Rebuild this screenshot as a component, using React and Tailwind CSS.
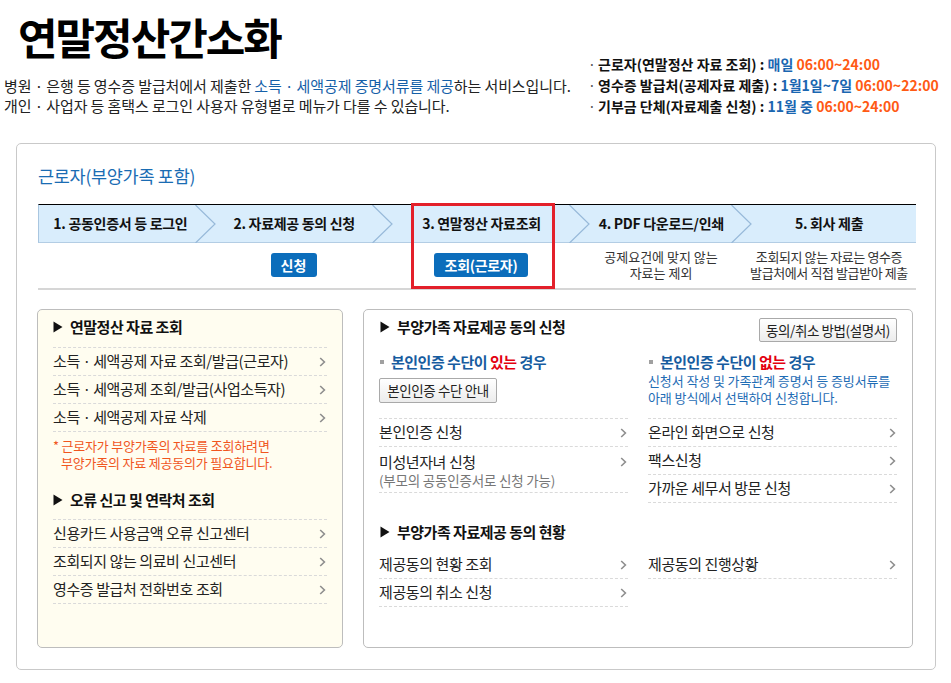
import React from "react";

const FONT = { fontFamily: '"Noto Sans CJK KR", "Noto Sans", sans-serif' };

function Chev() {
  return (
    <svg width="7" height="10" viewBox="0 0 7 10" className="shrink-0">
      <path d="M1.2 1 L5.4 5 L1.2 9" fill="none" stroke="#8e8e8e" strokeWidth="1.6" />
    </svg>
  );
}

function Tri() {
  return (
    <svg width="10" height="12" viewBox="0 0 10 12" className="shrink-0">
      <polygon points="0.5,0.5 9.5,6 0.5,11.5" fill="#111" />
    </svg>
  );
}

function Heading({ children }) {
  return (
    <div className="flex items-center gap-[7px] h-[20px] text-[15px] font-bold text-[#111] tracking-[-0.5px]">
      <Tri />
      <span>{children}</span>
    </div>
  );
}

function Item({ children }) {
  return (
    <li className="flex items-center justify-between h-[28px] border-b border-dashed border-[#dadada] text-[15px] text-[#222] tracking-[-0.4px] pr-[1px]">
      <span>{children}</span>
      <Chev />
    </li>
  );
}

function StepChevron() {
  return (
    <svg
      width="21"
      height="38"
      viewBox="0 0 21 38"
      className="absolute right-[-10px] top-0 z-10"
    >
      <polyline points="0.5,0 20,19 0.5,38" fill="none" stroke="#97b9d9" strokeWidth="1.2" />
    </svg>
  );
}

const steps = [
  { w: "w-[167px]", label: "1. 공동인증서 등 로그인" },
  { w: "w-[177px]", label: "2. 자료제공 동의 신청" },
  { w: "w-[198px]", label: "3. 연말정산 자료조회" },
  { w: "w-[162px]", label: "4. PDF 다운로드/인쇄" },
  { w: "w-[174px]", label: "5. 회사 제출" },
];

export default function App() {
  return (
    <div className="w-[951px] h-[683px] bg-white overflow-hidden text-[#222]" style={FONT}>
      {/* header */}
      <div className="flex h-[143px]">
        <div className="w-[584px] pl-[4px]">
          <div className="pl-[14px] pt-[15px] h-[61px] text-[43px] leading-[43px] font-bold tracking-[-2px] text-black">
            연말정산간소화
          </div>
          <div className="mt-[15px] text-[15px] leading-[20px] text-[#222] tracking-[-0.1px]">
            <div>
              병원 · 은행 등 영수증 발급처에서 제출한{" "}
              <span className="text-[#1560a8]">소득 · 세액공제 증명서류를 제공</span>하는 서비스입니다.
            </div>
            <div>개인 · 사업자 등 홈택스 로그인 사용자 유형별로 메뉴가 다를 수 있습니다.</div>
          </div>
        </div>
        <div className="pt-[54px] pl-[4px] text-[14px] leading-[21px] font-bold text-[#111]">
          <div className="flex">
            <span className="w-[10px] font-normal text-[#555]">·</span>
            <span>
              근로자(연말정산 자료 조회) : <span className="text-[#1a66b1]">매일</span>{" "}
              <span className="text-[#ff5a14]">06:00~24:00</span>
            </span>
          </div>
          <div className="flex">
            <span className="w-[10px] font-normal text-[#555]">·</span>
            <span>
              영수증 발급처(공제자료 제출) : <span className="text-[#1a66b1]">1월1일~7일</span>{" "}
              <span className="text-[#ff5a14]">06:00~22:00</span>
            </span>
          </div>
          <div className="flex">
            <span className="w-[10px] font-normal text-[#555]">·</span>
            <span>
              기부금 단체(자료제출 신청) : <span className="text-[#1a66b1]">11월 중</span>{" "}
              <span className="text-[#ff5a14]">06:00~24:00</span>
            </span>
          </div>
        </div>
      </div>

      {/* main box */}
      <div className="ml-[16px] w-[920px] h-[527px] border border-[#c9c9c9] rounded-[5px] pl-[21px] pt-[20px]">
        <div className="h-[24px] leading-[24px] text-[17.5px] text-[#1a6cb3] tracking-[-0.3px]">
          근로자(부양가족 포함)
        </div>

        <div className="relative mt-[16px] w-[878px]">
          {/* steps bar */}
          <div className="flex h-[39px] border-t border-t-black border-b border-b-[#b3cde4] border-l border-l-[#a9c6e0] bg-[#d9edfc]">
            {steps.map((s, i) => (
              <div
                key={i}
                className={`${s.w} relative flex items-center justify-center text-[14px] font-bold text-[#111] tracking-[-0.3px]`}
              >
                <span className={i === 0 ? "pr-[4px]" : ""}>{s.label}</span>
                {i < 4 && <StepChevron />}
              </div>
            ))}
          </div>

          {/* under row */}
          <div className="flex h-[47px] border-b-2 border-b-[#d6d6d6]">
            <div className="w-[167px]" />
            <div className="w-[177px] flex justify-center pt-[10px]">
              <div className="h-[24px] w-[46px] rounded-[3px] bg-[#0b6dbb] text-white text-[14px] font-bold leading-[24px] text-center">
                신청
              </div>
            </div>
            <div className="w-[198px] flex justify-center pt-[10px]">
              <div className="h-[24px] w-[94px] rounded-[3px] bg-[#0b6dbb] text-white text-[14px] font-bold leading-[24px] text-center tracking-[-0.3px]">
                조회(근로자)
              </div>
            </div>
            <div className="w-[162px] pt-[6px] text-center text-[13px] leading-[16px] text-[#333]">
              <div>공제요건에 맞지 않는</div>
              <div>자료는 제외</div>
            </div>
            <div className="w-[174px] pt-[6px] text-center text-[13px] leading-[16px] text-[#333] tracking-[-0.4px]">
              <div>조회되지 않는 자료는 영수증</div>
              <div>발급처에서 직접 발급받아 제출</div>
            </div>
          </div>

          {/* highlight */}
          <div className="absolute left-[373px] top-[-1px] w-[144px] h-[86px] border-[3px] border-[#e3202a] pointer-events-none" />
        </div>

        {/* panels */}
        <div className="flex gap-[20px] mt-[19px] ml-[-1px]">
          {/* left panel */}
          <div className="w-[306px] h-[339px] border border-[#bdbdbd] rounded-[5px] bg-[#fffdf0] px-[15px] pt-[7px]">
            <Heading>연말정산 자료 조회</Heading>
            <ul className="mt-[10px] border-t border-dashed border-[#dadada]">
              <Item>소득ㆍ세액공제 자료 조회/발급(근로자)</Item>
              <Item>소득ㆍ세액공제 조회/발급(사업소득자)</Item>
              <Item>소득ㆍ세액공제 자료 삭제</Item>
            </ul>
            <div className="mt-[5px] text-[13px] leading-[17px] text-[#f0561e] tracking-[-0.2px]">
              <div>* 근로자가 부양가족의 자료를 조회하려면</div>
              <div className="pl-[8px]">부양가족의 자료 제공동의가 필요합니다.</div>
            </div>
            <div className="mt-[19px]">
              <Heading>오류 신고 및 연락처 조회</Heading>
            </div>
            <ul className="mt-[9px] border-t border-dashed border-[#dadada]">
              <Item>신용카드 사용금액 오류 신고센터</Item>
              <Item>조회되지 않는 의료비 신고센터</Item>
              <Item>영수증 발급처 전화번호 조회</Item>
            </ul>
          </div>

          {/* right panel */}
          <div className="w-[550px] h-[339px] border border-[#bdbdbd] rounded-[5px] bg-white pl-[16px] pr-[15px] pt-[7px]">
            <div className="flex justify-between">
              <Heading>부양가족 자료제공 동의 신청</Heading>
              <div className="mt-[1px] h-[24px] w-[138px] border border-[#a9a9a9] rounded-[2px] bg-gradient-to-b from-white to-[#ececec] text-[13.5px] leading-[22px] text-center text-[#222] tracking-[-0.4px]">
                동의/취소 방법(설명서)
              </div>
            </div>

            <div className="grid grid-cols-2 gap-x-[20px] mt-[10px] ml-[-1px]">
              {/* left col */}
              <div>
                <div className="h-[66px]">
                  <div className="flex items-center h-[20px] text-[15px] font-bold text-[#175c9f] tracking-[-0.5px]">
                    <span className="w-[4px] h-[4px] bg-[#a0a0a0] mr-[7px] ml-[1px]" />
                    본인인증 수단이&nbsp;<span className="text-[#e3000f]">있는</span>&nbsp;경우
                  </div>
                  <div className="mt-[6px] h-[25px] w-[118px] border border-[#a9a9a9] rounded-[2px] bg-gradient-to-b from-white to-[#ececec] text-[13.5px] leading-[23px] text-center text-[#222] tracking-[-0.4px]">
                    본인인증 수단 안내
                  </div>
                </div>
                <ul className="border-t border-dashed border-[#dadada]">
                  <Item>본인인증 신청</Item>
                  <li className="flex items-start justify-between h-[46px] pt-[5px] border-b border-dashed border-[#dadada] pr-[1px]">
                    <div>
                      <div className="text-[15px] leading-[20px] text-[#222] tracking-[-0.4px]">미성년자녀 신청</div>
                      <div className="text-[13.5px] leading-[16px] text-[#777] tracking-[-0.2px]">
                        (부모의 공동인증서로 신청 가능)
                      </div>
                    </div>
                    <div className="h-[20px] flex items-center">
                      <Chev />
                    </div>
                  </li>
                </ul>
              </div>

              {/* right col */}
              <div>
                <div className="h-[66px]">
                  <div className="flex items-center h-[20px] text-[15px] font-bold text-[#175c9f] tracking-[-0.5px]">
                    <span className="w-[4px] h-[4px] bg-[#a0a0a0] mr-[7px] ml-[1px]" />
                    본인인증 수단이&nbsp;<span className="text-[#e3000f]">없는</span>&nbsp;경우
                  </div>
                  <div className="text-[13px] leading-[17px] text-[#1f6db5] tracking-[-0.1px]">
                    <div>신청서 작성 및 가족관계 증명서 등 증빙서류를</div>
                    <div>아래 방식에서 선택하여 신청합니다.</div>
                  </div>
                </div>
                <ul className="border-t border-dashed border-[#dadada]">
                  <Item>온라인 화면으로 신청</Item>
                  <Item>팩스신청</Item>
                  <Item>가까운 세무서 방문 신청</Item>
                </ul>
              </div>
            </div>

            <div className="mt-[19px]">
              <Heading>부양가족 자료제공 동의 현황</Heading>
            </div>
            <div className="grid grid-cols-2 gap-x-[20px] mt-[9px] ml-[-1px]">
              <ul>
                <Item>제공동의 현황 조회</Item>
                <Item>제공동의 취소 신청</Item>
              </ul>
              <ul>
                <Item>제공동의 진행상황</Item>
              </ul>
            </div>
          </div>
        </div>
      </div>
    </div>
  );
}
